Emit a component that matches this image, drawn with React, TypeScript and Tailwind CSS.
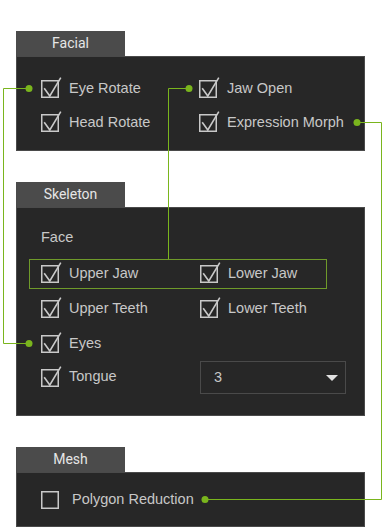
import type { ReactNode } from 'react';

const GREEN = '#7ab51d';

function Check({ checked = true }: { checked?: boolean }) {
  return (
    <span className="w-[18px] h-[18px] shrink-0 block">
      <svg width="18" height="18" viewBox="0 0 18 18" overflow="visible" className="block">
        <rect x="0.75" y="0.75" width="16.5" height="16.5" fill="none" stroke="#c9c9c9" strokeWidth="1.5" />
        {checked && (
          <path
            d="M3.2 8.2 L8.8 16 L19.8 -2.3"
            fill="none"
            stroke="#c9c9c9"
            strokeWidth="1.6"
            strokeLinejoin="miter"
          />
        )}
      </svg>
    </span>
  );
}

function Item({ label, checked = true, gap = 'gap-[10px]' }: { label: string; checked?: boolean; gap?: string }) {
  return (
    <div className={`flex items-center h-[18px] ${gap}`}>
      <Check checked={checked} />
      <span className="pb-[2px] text-[14.5px] leading-[17px] text-[#c8c8c8] whitespace-nowrap">{label}</span>
    </div>
  );
}

function Section({ title, children }: { title: string; children: ReactNode }) {
  return (
    <div>
      <div className="w-[109px] h-[25px] bg-[#4b4b4b] flex items-center justify-center text-[14px] text-[#e6e6e6] font-['Roboto',sans-serif]">
        {title}
      </div>
      <div className="border border-[#4a4a4a] bg-[#272727]">{children}</div>
    </div>
  );
}

function Connectors() {
  return (
    <svg width="382" height="530" className="absolute inset-0 pointer-events-none">
      <g fill="none" stroke={GREEN} strokeWidth="1">
        <path d="M29 88.5 H3.5 V343.5 H29" />
        <path d="M189 88.5 H168.5 V259" />
        <path d="M357 122.5 H381.5 V499.5 H205" />
      </g>
      <g fill={GREEN}>
        <circle cx="29" cy="88.5" r="3.5" />
        <circle cx="29" cy="343.5" r="3.5" />
        <circle cx="189" cy="88.5" r="3.5" />
        <circle cx="357" cy="122.5" r="3.5" />
        <circle cx="205" cy="499.5" r="3.5" />
      </g>
    </svg>
  );
}

export default function App() {
  return (
    <div className="relative w-[382px] h-[530px] bg-white overflow-hidden font-['Liberation_Sans',Arial,sans-serif]">
      <div className="pt-[31px] pl-4 w-[365px] flex flex-col gap-[31px]">
        <Section title="Facial">
          <div className="grid grid-cols-[158px_1fr] gap-y-4 pl-6 pt-[23px] pb-[18px]">
            <Item label="Eye Rotate" />
            <Item label="Jaw Open" />
            <Item label="Head Rotate" />
            <Item label="Expression Morph" />
          </div>
        </Section>

        <Section title="Skeleton">
          <div className="pl-6 pt-[21px] pb-[21px]">
            <div className="h-[17px] text-[14.5px] leading-[17px] text-[#c8c8c8]">Face</div>
            <div className="mt-[13px] -ml-3 w-[298px] h-[30px] border border-[#6f9a2a] pl-[11px] grid grid-cols-[159px_1fr] items-center">
              <Item label="Upper Jaw" />
              <Item label="Lower Jaw" />
            </div>
            <div className="mt-[11px] grid grid-cols-[159px_1fr]">
              <Item label="Upper Teeth" />
              <Item label="Lower Teeth" />
            </div>
            <div className="mt-[17px]">
              <Item label="Eyes" />
            </div>
            <div className="mt-2 grid grid-cols-[159px_1fr] items-center h-[33px]">
              <Item label="Tongue" />
              <div className="w-[146px] h-[33px] border border-[#4a4a4a] flex items-center justify-between pl-[13px] pr-[7px]">
                <span className="text-[14.5px] text-[#c8c8c8]">3</span>
                <svg width="12" height="6" viewBox="0 0 12 6">
                  <path d="M0 0 H12 L6 6 Z" fill="#e2e2e2" />
                </svg>
              </div>
            </div>
          </div>
        </Section>

        <Section title="Mesh">
          <div className="pl-6 pt-[18px] pb-[17px]">
            <Item label="Polygon Reduction" checked={false} gap="gap-[13px]" />
          </div>
        </Section>
      </div>
      <Connectors />
    </div>
  );
}
